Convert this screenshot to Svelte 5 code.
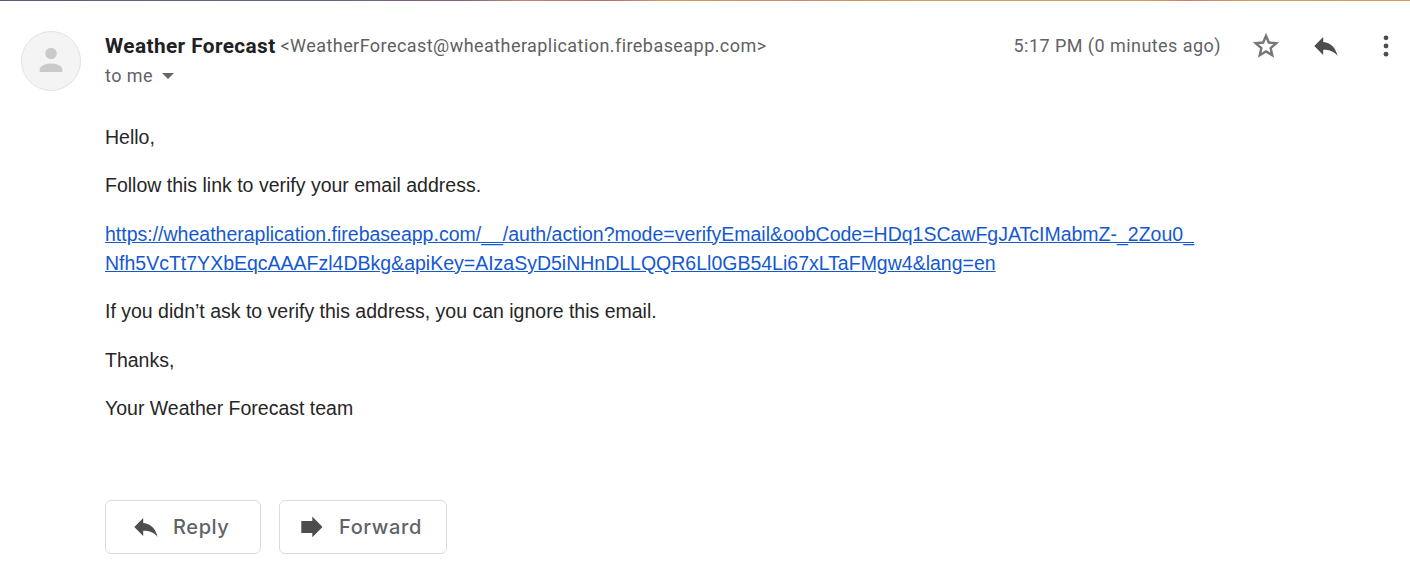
<script>
  const link = [
    'https://wheatheraplication.firebaseapp.com/__/auth/action?mode=verifyEmail&oobCode=HDq1SCawFgJATcIMabmZ-_2Zou0_',
    'Nfh5VcTt7YXbEqcAAAFzl4DBkg&apiKey=AIzaSyD5iNHnDLLQQR6Ll0GB54Li67xLTaFMgw4&lang=en'
  ];
</script>

{#snippet replyIcon()}
  <svg class="icon" viewBox="0 0 30 30" aria-hidden="true">
    <path d="M12.200 11V6L3.300 15l8.900 9v-5.200c6.600 0 10.800 1.700 14.300 6.100C25.200 18.500 20.800 11.700 12.200 11z" />
  </svg>
{/snippet}

<main>
  <div class="strip"></div>
  <header>
    <div class="avatar">
      <svg viewBox="0 0 60 60" aria-hidden="true">
        <circle cx="30" cy="30" r="29.5" fill="#f4f4f4" stroke="#e2e2e2" />
        <circle cx="30" cy="22.500" r="5.700" fill="#cacaca" />
        <path d="M18.700 41v-2.800c0-3.700 7.500-5.600 11.300-5.600s11.300 1.900 11.300 5.600V41z" fill="#cacaca" />
      </svg>
    </div>
    <div class="sender">
      <div class="from"><b>Weather Forecast</b><span>&lt;WeatherForecast@wheatheraplication.firebaseapp.com&gt;</span></div>
      <div class="to">to me <svg viewBox="0 0 12 6" aria-hidden="true"><path d="M0 0h12L6 6z" /></svg></div>
    </div>
    <div class="actions">
      <time>5:17 PM (0 minutes ago)</time>
      <svg class="icon star" viewBox="0 0 30 30" aria-hidden="true">
        <path d="M15 4.800l2.800 6.700 7.500.7-5.700 4.900 1.700 7.100-6.300-3.800-6.300 3.800 1.700-7.100-5.700-4.900 7.500-.7z" />
      </svg>
      {@render replyIcon()}
      <svg class="icon" viewBox="0 0 30 30" aria-hidden="true">
        <circle cx="15" cy="6.800" r="2.400" /><circle cx="15" cy="15" r="2.400" /><circle cx="15" cy="23.200" r="2.400" />
      </svg>
    </div>
  </header>
  <article>
    <p>Hello,</p>
    <p>Follow this link to verify your email address.</p>
    <p><a href="#verify">{link[0]}<br />{link[1]}</a></p>
    <p>If you didn’t ask to verify this address, you can ignore this email.</p>
    <p>Thanks,</p>
    <p>Your Weather Forecast team</p>
  </article>
  <footer>
    <button class="reply">{@render replyIcon()}<span>Reply</span></button>
    <button class="forward">
      <svg class="icon" viewBox="0 0 30 30" aria-hidden="true"><path d="M4.300 9h11V4.500L25.500 15 15.300 25.200V21h-11z" /></svg>
      <span>Forward</span>
    </button>
  </footer>
</main>

<style>
  :global(body) { background: #fff; }
  main { height: 583px; overflow: hidden; box-sizing: border-box; }
  .strip {
    height: 1px;
    background: linear-gradient(90deg, #5b5a7d 0%, #77617f 26%, #86627d 33%, #c28570 37%, #b56f70 43%, #cf9968 47%, #c98c6b 57%, #d0a066 66%, #d0a066 81%, #c9806c 84%, #d0a066 89%, #cf9b6a 100%);
  }
  header { display: flex; height: 90px; padding: 30px 9px 0 21px; box-sizing: border-box; font-family: Roboto, sans-serif; color: #5f6368; }
  .avatar { width: 60px; height: 60px; margin-right: 24px; }
  .avatar svg { display: block; width: 60px; height: 60px; }
  .sender { flex: 1; }
  .from { display: flex; align-items: flex-start; height: 29px; line-height: 29px; white-space: nowrap; }
  .from b { width: 175.500px; font-size: 20.800px; line-height: 31px; letter-spacing: 0.4px; color: #202124; }
  .from span { font-size: 18px; letter-spacing: 0.44px; color: #5f5f5f; }
  .to { display: flex; align-items: center; height: 30px; font-size: 18px; letter-spacing: 0.45px; }
  .to svg { width: 12px; height: 6px; margin: 1px 0 0 9px; fill: #666; }
  .actions { display: flex; align-items: center; height: 30px; gap: 30px; }
  time { font-size: 18px; line-height: 29px; padding-bottom: 1px; letter-spacing: 0.45px; white-space: nowrap; }
  .icon { width: 30px; height: 30px; flex: none; fill: #4d4d4d; display: block; }
  .star { fill: none; stroke: #777; stroke-width: 2.4; }
  article { padding: 31.600px 105px 0; font: 19.5px/29.25px "Liberation Sans", Arial, sans-serif; color: #262626; white-space: nowrap; }
  p { margin: 0 0 19.250px; }
  a { color: #1559d0; }
  footer { display: flex; gap: 18px; padding: 57.200px 105px 0; }
  button { display: flex; align-items: center; height: 54px; padding: 0; border: 1.5px solid #dadce0; border-radius: 6px; background: #fff; box-sizing: border-box; color: #5f6368; font: 500 20px Inter, sans-serif; letter-spacing: 0.6px; }
  .reply { width: 156px; padding-left: 25px; }
  .forward { width: 168px; padding-left: 17px; }
  button .icon { margin-right: 12px; }
</style>
